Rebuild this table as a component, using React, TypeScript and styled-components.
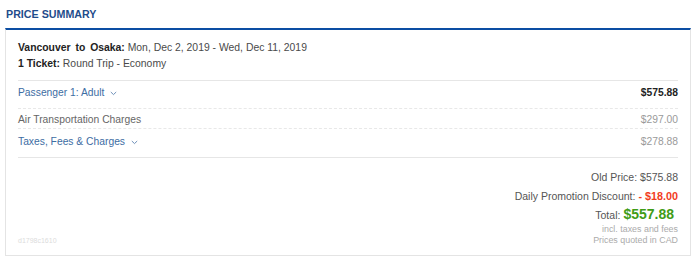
import React from "react";
import styled, { createGlobalStyle } from "styled-components";

const GlobalStyle = createGlobalStyle`
  html, body {
    margin: 0;
    padding: 0;
    background: #ffffff;
    font-family: "Liberation Sans", Arial, Helvetica, sans-serif;
  }
`;

const Wrapper = styled.section`
  width: 686px;
  padding: 0 9px 0 5px;
`;

const Title = styled.h2`
  margin: 0;
  padding: 8px 1px 7px;
  font-size: 10.7px;
  line-height: 13px;
  font-weight: 700;
  color: #1f4c8b;
`;

const Card = styled.div`
  border: 1px solid #e4e4e4;
  border-top: 2px solid #0c4ea3;
  padding: 10px 12px 9px;
`;

const Trip = styled.div`
  font-size: 10.4px;
  line-height: 16px;
  color: #4a4a4a;
  padding-bottom: 8px;
  border-bottom: 1px solid #e6e6e6;
`;

const TripLabel = styled.b<{ $wide?: boolean }>`
  color: #222;
  font-weight: 700;
  word-spacing: ${(p) => (p.$wide ? "2px" : "0")};
`;

const Row = styled.div<{ $pt: number; $pb: number; $dotted?: boolean }>`
  display: flex;
  justify-content: space-between;
  align-items: center;
  font-size: 10.3px;
  line-height: 14px;
  padding: ${(p) => p.$pt}px 0 ${(p) => p.$pb}px;
  border-bottom: 1px ${(p) => (p.$dotted ? "dashed #e8e8e8" : "solid #e6e6e6")};
`;

const Toggle = styled.span`
  display: inline-flex;
  align-items: center;
  gap: 6px;
  color: #3d6da3;
`;

const Label = styled.span`
  color: #666;
`;

const Amount = styled.span<{ $strong?: boolean }>`
  color: ${(p) => (p.$strong ? "#222" : "#9a9a9a")};
  font-weight: ${(p) => (p.$strong ? 700 : 400)};
`;

const Summary = styled.div`
  display: flex;
  justify-content: space-between;
  align-items: flex-end;
  padding-top: 10px;
`;

const Hash = styled.span`
  font-size: 7px;
  line-height: 11px;
  color: #dcdcdc;
`;

const Totals = styled.div`
  display: flex;
  flex-direction: column;
  align-items: flex-end;
  color: #555;
`;

const Line = styled.div<{ $h: number; $size: number; $mr?: number }>`
  font-size: ${(p) => p.$size}px;
  line-height: ${(p) => p.$h}px;
  margin-right: ${(p) => p.$mr ?? 0}px;
  white-space: nowrap;
`;

const Discount = styled.b`
  color: #f23c1d;
  font-weight: 700;
  font-size: 10.8px;
`;

const Total = styled.b`
  color: #3f9c16;
  font-weight: 700;
  font-size: 14px;
  margin-left: 3px;
`;

const Note = styled(Line)`
  color: #ababab;
`;

const Chevron = () => (
  <svg width="7" height="5" viewBox="0 0 7 5" fill="none">
    <path d="M0.8 1 L3.5 3.6 L6.2 1" stroke="#6d8fb8" strokeWidth="1" />
  </svg>
);

export default function App() {
  return (
    <>
      <GlobalStyle />
      <Wrapper>
        <Title>PRICE SUMMARY</Title>
        <Card>
          <Trip>
            <div>
              <TripLabel $wide>Vancouver to Osaka:</TripLabel> Mon, Dec 2, 2019 - Wed, Dec 11, 2019
            </div>
            <div>
              <TripLabel>1 Ticket:</TripLabel> Round Trip - Economy
            </div>
          </Trip>
          <Row $pt={5} $pb={8} $dotted>
            <Toggle>
              Passenger 1: Adult <Chevron />
            </Toggle>
            <Amount $strong>$575.88</Amount>
          </Row>
          <Row $pt={4} $pb={1} $dotted>
            <Label>Air Transportation Charges</Label>
            <Amount>$297.00</Amount>
          </Row>
          <Row $pt={6} $pb={8}>
            <Toggle>
              Taxes, Fees &amp; Charges <Chevron />
            </Toggle>
            <Amount>$278.88</Amount>
          </Row>
          <Summary>
            <Hash>d1798c1610</Hash>
            <Totals>
              <Line $h={19} $size={10.5}>
                Old Price: $575.88
              </Line>
              <Line $h={19} $size={10.5}>
                Daily Promotion Discount: <Discount>- $18.00</Discount>
              </Line>
              <Line $h={16} $size={10.5} $mr={4}>
                Total:<Total>$557.88</Total>
              </Line>
              <Note $h={12} $size={8.9}>
                incl. taxes and fees
              </Note>
              <Note $h={11} $size={8.9}>
                Prices quoted in CAD
              </Note>
            </Totals>
          </Summary>
        </Card>
      </Wrapper>
    </>
  );
}
